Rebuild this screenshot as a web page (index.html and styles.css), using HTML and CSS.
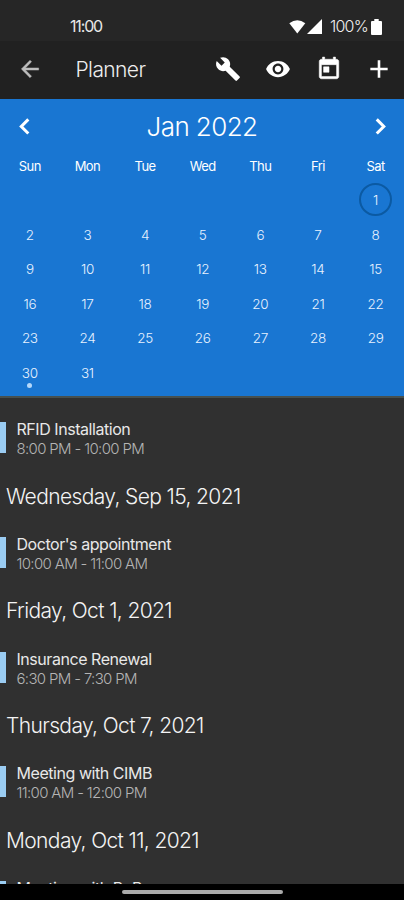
FILE: index.html
```html
<!DOCTYPE html>
<html lang="en">
<head>
<meta charset="utf-8">
<title>Planner</title>
<link rel="stylesheet" href="styles.css">
</head>
<body>
<div class="screen">
  <div class="status">
    <span class="clock">11:00</span>
    <div class="indicators">
      <svg class="wifi" width="17" height="14" viewBox="0 0 17 14"><path fill="#fff" d="M0.300 3.300Q8.300-2.900 16.300 3.300L8.300 13.500Z"/></svg>
      <svg class="signal" width="15" height="15" viewBox="0 0 15 15"><path fill="#fff" d="M0 15L15 0V15Z"/></svg>
      <span class="percent">100%</span>
      <svg class="battery" width="11" height="16" viewBox="0 0 11 16"><path fill="#fff" d="M3.300 0h4.400v2H10q1 0 1 1v12q0 1-1 1H1q-1 0-1-1V3q0-1 1-1h2.300Z"/></svg>
    </div>
  </div>
  <header class="bar">
    <svg class="back" width="26" height="26" viewBox="0 0 24 24"><path fill="#bdbdbd" stroke="#bdbdbd" stroke-width=".4" d="M20 11H7.830l5.590-5.590L12 4l-8 8 8 8 1.410-1.410L7.830 13H20v-2z"/></svg>
    <h1>Planner</h1>
    <div class="actions">
      <svg width="26" height="26" viewBox="0 0 24 24"><path fill="#fff" d="M22.700 19l-9.100-9.100c.9-2.300.4-5-1.500-6.900-2-2-5-2.400-7.400-1.300L9 6 6 9 1.600 4.700C.4 7.100.9 10.100 2.900 12.100c1.900 1.900 4.600 2.400 6.900 1.500l9.100 9.100c.4.4 1 .4 1.400 0l2.300-2.300c.5-.4.5-1.100.1-1.400z"/></svg>
      <svg width="26" height="26" viewBox="0 0 24 24"><path fill="#fff" d="M12 4.500C7 4.500 2.730 7.610 1 12c1.730 4.390 6 7.500 11 7.500s9.270-3.110 11-7.500c-1.730-4.390-6-7.500-11-7.500zM12 17c-2.760 0-5-2.240-5-5s2.240-5 5-5 5 2.240 5 5-2.240 5-5 5zm0-8c-1.660 0-3 1.340-3 3s1.340 3 3 3 3-1.340 3-3-1.340-3-3-3z"/></svg>
      <svg width="26" height="26" viewBox="0 0 24 24"><path fill="#fff" stroke="#fff" stroke-width=".5" d="M19 3h-1V1h-2v2H8V1H6v2H5c-1.110 0-1.990.9-1.990 2L3 19c0 1.100.89 2 2 2h14c1.100 0 2-.9 2-2V5c0-1.100-.9-2-2-2zm0 16H5V8h14v11zM7 10h5v5H7z"/></svg>
      <svg width="26" height="26" viewBox="0 0 24 24"><path fill="#fff" d="M20 13.200H13.200v6.800h-2.400v-6.800H4v-2.400h6.800V4h2.400v6.800h6.800z"/></svg>
    </div>
  </header>
  <section class="calendar">
    <div class="month">
      <svg width="26" height="26" viewBox="0 0 24 24"><path fill="none" stroke="#fff" stroke-width="2.800" d="M16 5L9.500 11.500l6.500 6.500"/></svg>
      <h2>Jan 2022</h2>
      <svg width="26" height="26" viewBox="0 0 24 24"><path fill="none" stroke="#fff" stroke-width="2.800" d="M9 5L15.500 11.500l-6.500 6.500"/></svg>
    </div>
    <div class="grid weekdays"><span>Sun</span><span>Mon</span><span>Tue</span><span>Wed</span><span>Thu</span><span>Fri</span><span>Sat</span></div>
    <div class="grid days">
      <span class="today">1</span>
      <span>2</span><span>3</span><span>4</span><span>5</span><span>6</span><span>7</span><span>8</span>
      <span>9</span><span>10</span><span>11</span><span>12</span><span>13</span><span>14</span><span>15</span>
      <span>16</span><span>17</span><span>18</span><span>19</span><span>20</span><span>21</span><span>22</span>
      <span>23</span><span>24</span><span>25</span><span>26</span><span>27</span><span>28</span><span>29</span>
      <span class="marked">30</span><span>31</span>
    </div>
  </section>
  <main class="agenda">
    <article class="event"><div class="name">RFID Installation</div><div class="time">8:00 PM - 10:00 PM</div></article>
    <h3>Wednesday, Sep 15, 2021</h3>
    <article class="event"><div class="name">Doctor's appointment</div><div class="time">10:00 AM - 11:00 AM</div></article>
    <h3>Friday, Oct 1, 2021</h3>
    <article class="event"><div class="name">Insurance Renewal</div><div class="time">6:30 PM - 7:30 PM</div></article>
    <h3>Thursday, Oct 7, 2021</h3>
    <article class="event"><div class="name">Meeting with CIMB</div><div class="time">11:00 AM - 12:00 PM</div></article>
    <h3>Monday, Oct 11, 2021</h3>
    <article class="event"><div class="name">Meeting with BoB</div></article>
  </main>
  <footer class="nav"><div class="handle"></div></footer>
</div>
</body>
</html>
```
FILE: styles.css
```css
* { box-sizing: border-box; }
body { margin: 0; background: #303030; }
h1, h2, h3 { margin: 0; font-weight: 300; }
svg { display: block; flex: none; }
.screen {
  width: 404px; height: 900px; overflow: hidden;
  display: flex; flex-direction: column;
  font-family: Inter, "Liberation Sans", sans-serif;
  font-weight: 300; color: #fff; white-space: nowrap;
}
.status {
  flex: none; height: 41px; padding: 12px 22px 0 70px; background: #262626;
  display: flex; justify-content: space-between; line-height: 29px;
}
.clock { font-size: 16px; font-weight: 400; letter-spacing: -1.150px; color: #e8e8e8; }
.indicators { display: flex; align-items: center; height: 29px; }
.wifi { margin-right: 1px; }
.percent { margin-left: 8px; width: 37px; font-size: 16px; letter-spacing: -0.800px; color: #f0f0f0; }
.battery { margin-left: 4px; }
.bar {
  flex: none; height: 58px; padding: 0 12px 2px 17px; background: #212121;
  display: flex; align-items: center;
}
.bar h1 { margin-left: 32.500px; font-size: 21px; letter-spacing: -0.600px; color: #eee; }
.actions { margin-left: auto; display: flex; gap: 24.500px; }
.calendar { flex: none; height: 299px; background: #1976d2; border-bottom: 2px solid #46504f; }
.month { height: 55px; padding: 0 11px; display: flex; align-items: center; justify-content: space-between; }
.month h2 { font-size: 26px; letter-spacing: -0.600px; }
.grid { display: grid; grid-template-columns: repeat(7, 57.640px); padding-left: 1px; text-align: center; }
.weekdays { height: 29px; line-height: 25px; font-size: 13px; font-weight: 400; letter-spacing: -0.600px; }
.days { grid-auto-rows: 34.600px; line-height: 35px; font-size: 13.500px; letter-spacing: -0.300px; color: #e8f2ff; }
.today {
  grid-column: 7; justify-self: center; width: 33px; height: 33px; line-height: 30px;
  border: 2px solid #0b5aa3; border-radius: 50%;
}
.marked { display: flex; flex-direction: column; align-items: center; }
.marked::after { content: ""; width: 5px; height: 5px; margin-top: -8px; flex: none; border-radius: 50%; background: #b5d8fa; }
.agenda { flex: 1; min-height: 0; overflow: hidden; padding-top: 21px; background: #303030; }
.event {
  height: 44px; padding-left: 10.500px; margin-bottom: 19.500px;
  border-left: 6px solid #90c5ed;
  border-image: linear-gradient(#303030 3px, #9accf2 3px, #9accf2 34px, #303030 34px) 0 0 0 6;
}
.name { font-size: 16px; line-height: 20px; font-weight: 400; letter-spacing: -0.450px; color: #e8e8e8; }
.time { font-size: 15px; line-height: 19px; letter-spacing: -0.660px; color: #b4b4b4; }
.agenda h3 { height: 28px; margin-bottom: 23.300px; padding-left: 6px; line-height: 28px; font-size: 21px; letter-spacing: -0.620px; color: #f4f4f4; }
.nav { flex: none; height: 16px; background: #000; display: flex; align-items: center; justify-content: center; }
.handle { width: 161px; height: 4px; border-radius: 2px; background: #aaa; }
```
